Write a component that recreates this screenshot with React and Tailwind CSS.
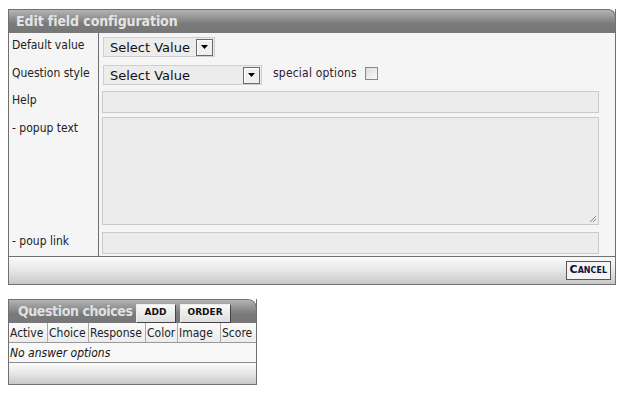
import React from "react";

const Arrow = () => (
  <span className="flex items-center justify-center w-[17px] h-[17px] border border-[#6a6a6a] bg-[#f0f0f0] shadow-[inset_1px_1px_0_#fff]">
    <svg width="7" height="4" viewBox="0 0 7 4"><path d="M0 0h7L3.5 4z" fill="#000" /></svg>
  </span>
);

const Select = ({ w }) => (
  <div className={`flex items-center justify-between h-[20px] ${w} bg-[#ececec] border border-[#cfcfcf] pl-[6px] pr-[1px]`}>
    <span className="text-[13px] text-[#111] leading-none" style={{ fontFamily: '"DejaVu Sans", Verdana, sans-serif' }}>Select Value</span>
    <Arrow />
  </div>
);

export default function App() {
  const tahoma = { fontFamily: '"DejaVu Sans Condensed", "DejaVu Sans", Tahoma, sans-serif' };
  const bold = { fontFamily: '"DejaVu Sans", Verdana, sans-serif' };
  const cond = { fontFamily: '"DejaVu Sans Condensed", "DejaVu Sans", sans-serif' };
  const label = "w-[90px] shrink-0 border-r border-[#6e6e6e] pl-[3px] text-[12px] text-[#222]";
  return (
    <div className="w-[640px] h-[399px] bg-white pt-[9px] pl-[8px]" style={tahoma}>
      {/* Panel 1 */}
      <div className="w-[608px] border-x border-b border-[#707070]">
        <div className="h-[24px] -mx-px rounded-tr-[8px] border-t border-x border-[#707070] bg-[linear-gradient(#b4b4b4,#7a7a7a_60%,#777)] flex items-center pl-[7px]">
          <span className="text-[14px] font-bold text-[#e4e4e4] tracking-[-0.1px]" style={cond}>Edit field configuration</span>
        </div>
        <div className="bg-[#f5f5f5]">
          <div className="flex h-[28px]">
            <div className={`${label} pt-[3px]`}>Default value</div>
            <div className="pl-[4px] pt-[4px]"><Select w="w-[112px]" /></div>
          </div>
          <div className="flex h-[27px]">
            <div className={`${label} pt-[3px]`}>Question style</div>
            <div className="pl-[4px] pt-[4px] flex items-start">
              <Select w="w-[159px]" />
              <span className="ml-[11px] mt-[-1px] text-[12px] text-[#302030] tracking-[0.2px]">special options</span>
              <span className="ml-[8px] mt-[2px] w-[13px] h-[13px] border border-[#8a8a8a] bg-[linear-gradient(135deg,#dcdcdc,#fafafa)]" />
            </div>
          </div>
          <div className="flex h-[26px]">
            <div className={`${label} pt-[3px]`}>Help</div>
            <div className="pl-[3px] pt-[3px]"><div className="w-[497px] h-[22px] bg-[#ececec] border border-[#cacaca]" /></div>
          </div>
          <div className="flex h-[114px]">
            <div className={`${label} pt-[5px]`}>- popup text</div>
            <div className="pl-[3px] pt-[3px]">
              <div className="relative w-[497px] h-[108px] bg-[#ececec] border border-[#cacaca]">
                <svg className="absolute right-[1px] bottom-[1px]" width="8" height="8" viewBox="0 0 8 8">
                  <path d="M7 1L1 7M7 4L4 7" stroke="#888" strokeWidth="1" />
                </svg>
              </div>
            </div>
          </div>
          <div className="flex h-[28px]">
            <div className={`${label} pt-[4px]`}>- poup link</div>
            <div className="pl-[3px] pt-[4px]"><div className="w-[497px] h-[22px] bg-[#ececec] border border-[#cacaca]" /></div>
          </div>
        </div>
        <div className="h-[28px] border-t border-[#707070] bg-[linear-gradient(#fbfbfb,#e6e6e6_50%,#c8c8c8)] flex items-center justify-end pr-[4px]">
          <span className="h-[19px] px-[3px] border border-[#555] bg-[#f4f4f4] flex items-center text-[11px] font-bold text-[#10103a]" style={{ ...bold, fontVariant: "small-caps" }}>Cancel</span>
        </div>
      </div>

      {/* Panel 2 */}
      <div className="mt-[14px] w-[249px] border-x border-b border-[#707070]">
        <div className="h-[24px] -mx-px rounded-tr-[9px] border-t border-x border-[#707070] bg-[linear-gradient(#b4b4b4,#7a7a7a_60%,#777)] flex items-center pl-[9px]">
          <span className="text-[14px] font-bold text-[#e0e0e0] tracking-[-0.4px]" style={cond}>Question choices</span>
          <span className="ml-[3px] w-[40px] h-[19px] mt-[3px] border-r border-b border-[#444] border-t border-l border-t-[#eee] border-l-[#eee] bg-[linear-gradient(#fafafa,#dedede)] flex items-center justify-center text-[9px] font-bold text-[#111]" style={bold}>ADD</span>
          <span className="ml-[4px] w-[51px] h-[19px] mt-[3px] border-r border-b border-[#444] border-t border-l border-t-[#eee] border-l-[#eee] bg-[linear-gradient(#fafafa,#dedede)] flex items-center justify-center text-[9px] font-bold text-[#111]" style={bold}>ORDER</span>
        </div>
        <div className="flex h-[20px] text-[12px] text-[#222] bg-[linear-gradient(#fafafa,#ececec)] border-b border-[#999]">
          {[["Active", "w-[39px]"], ["Choice", "w-[41px]"], ["Response", "w-[57px]"], ["Color", "w-[32px]"], ["Image", "w-[43px]"], ["Score", "flex-1"]].map(([t, w], i) => (
            <div key={t} className={`${w} ${i < 5 ? "border-r border-[#aaa]" : ""} flex items-center pl-[1px]`}>{t}</div>
          ))}
        </div>
        <div className="h-[20px] flex items-center pl-[1px] italic text-[12px] text-[#111] bg-[#f8f8f8] border-b border-[#888]">No answer options</div>
        <div className="h-[21px] bg-[linear-gradient(#fbfbfb,#e6e6e6_50%,#c8c8c8)]" />
      </div>
    </div>
  );
}
